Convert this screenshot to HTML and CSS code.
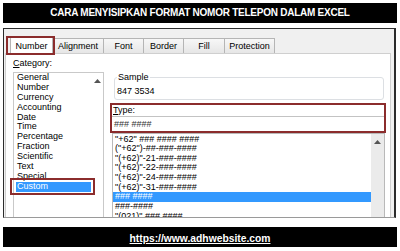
FILE: index.html
```html
<!DOCTYPE html>
<html lang="id">
<head>
<meta charset="UTF-8">
<meta name="viewport" content="width=device-width, initial-scale=1.0">
<title>Cara Menyisipkan Format Nomor Telepon dalam Excel</title>
<link rel="stylesheet" href="styles.css">
</head>
<body>

<h1 class="title">CARA MENYISIPKAN FORMAT NOMOR TELEPON DALAM EXCEL</h1>

<div class="shot">
  <div class="tabs">
    <span class="tab tab-active mark">Number</span>
    <span class="tab w-align">Alignment</span>
    <span class="tab w-font">Font</span>
    <span class="tab w-border">Border</span>
    <span class="tab w-fill">Fill</span>
    <span class="tab w-prot">Protection</span>
  </div>

  <div class="panel">
    <div class="category">
      <div class="label"><u>C</u>ategory:</div>
      <div class="listbox cat-list">
        <ul class="items">
          <li>General</li>
          <li>Number</li>
          <li>Currency</li>
          <li>Accounting</li>
          <li>Date</li>
          <li>Time</li>
          <li>Percentage</li>
          <li>Fraction</li>
          <li>Scientific</li>
          <li>Text</li>
          <li>Special</li>
          <li class="selected mark">Custom</li>
        </ul>
        <div class="scroll">
          <svg width="7" height="4" viewBox="0 0 7 4"><path d="M0 4 L3.5 0 L7 4 Z" fill="#555"/></svg>
        </div>
      </div>
    </div>

    <div class="formats">
      <fieldset class="sample">
        <legend>Sample</legend>
        <div class="sample-value">847 3534</div>
      </fieldset>

      <div class="type-box">
        <div class="label"><u>T</u>ype:</div>
        <div class="type-input">### ####</div>
      </div>

      <div class="listbox fmt-list">
        <ul class="items">
          <li>"+62" ### #### ####</li>
          <li>("+62")-##-###-####</li>
          <li>"(+62)"-21-###-####</li>
          <li>"(+62)"-22-###-####</li>
          <li>"(+62)"-24-###-####</li>
          <li>"(+62)"-31-###-####</li>
          <li class="selected">### ####</li>
          <li>###-####</li>
          <li>"(021)" ### ####</li>
        </ul>
        <div class="scroll">
          <svg width="7" height="4" viewBox="0 0 7 4"><path d="M0 4 L3.5 0 L7 4 Z" fill="#555"/></svg>
        </div>
      </div>
    </div>
  </div>
</div>

<footer class="footer"><a href="#">https://www.adhwebsite.com</a></footer>

</body>
</html>
```

FILE: styles.css
```css
* {
  box-sizing: border-box;
}

body {
  margin: 0;
  padding: 3px 3px 0 3px;
  background: #fff;
  font-family: 'Liberation Sans', Arial, sans-serif;
}

.title {
  margin: 0;
  height: 20px;
  line-height: 20px;
  background: #000;
  color: #fff;
  text-align: center;
  font-size: 10px;
  letter-spacing: -0.25px;
  font-weight: bold;
}

/* screenshot of the Format Cells dialog */
.shot {
  margin: 5px 1px 0 0;
  height: 190px;
  border: 1px solid #2b2b2b;
  border-right-width: 2px;
  border-bottom-color: #9a9a9a;
  background: #f0f0f0;
  padding: 9px 3px 0 1px;
  display: flex;
  flex-direction: column;
  overflow: hidden;
  font-size: 9px;
  color: #000;
}

.tabs {
  display: flex;
  height: 15px;
  margin-left: 5px;
}

.tab {
  height: 15px;
  line-height: 14px;
  text-align: center;
  border: 1px solid #b5b5b5;
  border-bottom: none;
  margin-left: -1px;
  background: linear-gradient(#f7f7f7, #e6e6e6);
}

.tab-active {
  width: 43px;
  margin-left: 0;
  height: 17px;
  margin-top: -1px;
  line-height: 16px;
  background: #fff;
  position: relative;
  z-index: 1;
}

.w-align { width: 52px; }
.w-font { width: 41px; }
.w-border { width: 41px; }
.w-fill { width: 42px; }
.w-prot { width: 51px; }

/* red marker boxes drawn over the screenshot */
.mark::after {
  content: "";
  position: absolute;
  border: 2px solid #8b2c2c;
}

.tab-active::after {
  left: -5px;
  right: -3px;
  top: -2px;
  bottom: -1px;
}

.panel {
  flex: 1;
  min-height: 0;
  background: #fff;
  border: 1px solid #cfcfcf;
  border-bottom: none;
  display: flex;
  padding: 4px 4px 0 7px;
}

.label {
  height: 11px;
  line-height: 11px;
}

.category {
  width: 91px;
  display: flex;
  flex-direction: column;
}

.category .label {
  margin-bottom: 3px;
}

.listbox {
  flex: 1;
  display: flex;
  border: 1px solid #c9c9c9;
  border-bottom: none;
}

.items {
  list-style: none;
  margin: 0;
  padding: 0;
  flex: 1;
}

.cat-list .items {
  padding-top: 0;
}

.cat-list .items li {
  height: 9.9px;
  line-height: 9.9px;
  padding-left: 1px;
  margin-left: 2px;
  white-space: nowrap;
}

.selected {
  background: #3399ff;
  color: #fff;
}

.cat-list .selected {
  position: relative;
}

.cat-list .selected::after {
  left: -6px;
  right: -4px;
  top: -4px;
  bottom: -3px;
}

.scroll {
  width: 12px;
  padding-top: 6px;
  display: flex;
  justify-content: center;
  align-items: flex-start;
}

.cat-list .scroll {
  background: #fff;
}

.formats {
  flex: 1;
  margin-left: 6px;
  display: flex;
  flex-direction: column;
  padding-top: 14px;
}

.sample {
  margin: 0 2px 0 4px;
  padding: 0 2px 3px 2px;
  border: 1px solid #dcdfe3;
  border-radius: 3px;
}

.sample legend {
  padding: 0 1px;
  height: 10px;
  line-height: 10px;
}

.sample-value {
  height: 10px;
  line-height: 10px;
  margin-top: 4px;
}

.type-box {
  margin-top: 3px;
  height: 30px;
  border: 2px solid #8b2c2c;
}

.type-box .label {
  height: 10px;
  line-height: 10px;
  padding-left: 1px;
}

.type-input {
  margin-top: 1px;
  height: 15px;
  line-height: 14px;
  padding-left: 2px;
  border-top: 1px solid #c3c3c3;
  color: #333;
}

.fmt-list {
  margin: 0 1px 0 2px;
  border-color: #b9b9b9;
}

.fmt-list .items {
  padding-top: 0.5px;
}

.fmt-list .items li {
  height: 9.65px;
  line-height: 9.65px;
  padding-left: 2px;
  white-space: nowrap;
}

.fmt-list .scroll {
  width: 13px;
  background: #ebebeb;
}

.footer {
  margin-top: 9px;
  height: 20px;
  line-height: 20px;
  background: #000;
  text-align: center;
}

.footer a {
  color: #fff;
  font-size: 10.3px;
  font-weight: bold;
}
```
